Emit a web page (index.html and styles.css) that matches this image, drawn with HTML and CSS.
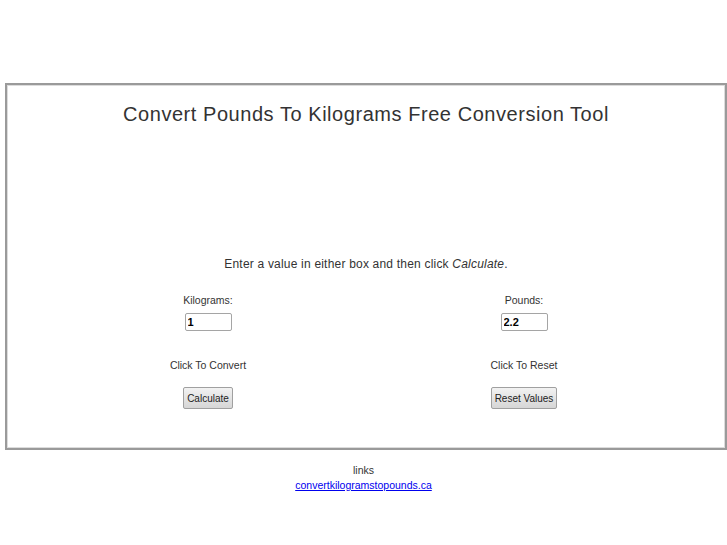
FILE: index.html
```html
<!DOCTYPE html>
<html>
<head>
<meta charset="utf-8">
<link rel="stylesheet" href="styles.css">
</head>
<body>
<div class="frame">
  <div class="inner">
    <h1 class="title">Convert Pounds To Kilograms Free Conversion Tool</h1>
    <p class="intro">Enter a value in either box and then click <em>Calculate</em>.</p>
    <div class="cols">
      <div class="col">
        <div class="label">Kilograms:</div>
        <input class="field" type="text" value="1">
        <div class="action">Click To Convert</div>
        <button class="btn">Calculate</button>
      </div>
      <div class="col">
        <div class="label">Pounds:</div>
        <input class="field" type="text" value="2.2">
        <div class="action">Click To Reset</div>
        <button class="btn">Reset Values</button>
      </div>
    </div>
  </div>
</div>
<div class="footer">
  <div class="links">links</div>
  <a class="link" href="#">convertkilogramstopounds.ca</a>
</div>
</body>
</html>
```

FILE: styles.css
```css
html, body {
  margin: 0;
  padding: 0;
  background: #fff;
}
body {
  font-family: "Liberation Sans", Arial, sans-serif;
  color: #333;
  overflow: hidden;
}
.frame {
  margin: 83px 0 0 5px;
  width: 718px;
  border: 2px solid #9a9a9a;
}
.inner {
  border: 1px solid #dcdcdc;
  height: 361px;
}
.title {
  margin: 16px 0 0 0;
  font-size: 20px;
  letter-spacing: 0.55px;
  font-weight: normal;
  text-align: center;
  line-height: 24px;
  color: #333;
}
.intro {
  margin: 130px 0 0 0;
  text-align: center;
  font-size: 12px;
  letter-spacing: 0.2px;
  line-height: 16px;
}
.cols {
  display: grid;
  grid-template-columns: 316px 316px;
  justify-content: center;
  margin-top: 21px;
  margin-left: 0;
}
.col {
  display: flex;
  flex-direction: column;
  align-items: center;
  font-size: 10.5px;
}
.label {
  line-height: 14px;
}
.field {
  margin-top: 6px;
  width: 41px;
  height: 14px;
  padding: 1px 2px;
  border: 1px solid #a5a5a5;
  border-radius: 2px;
  font-family: "Liberation Sans", Arial, sans-serif;
  font-size: 11px;
  font-weight: bold;
  color: #000;
  box-sizing: content-box;
}
.action {
  margin-top: 27px;
  line-height: 14px;
}
.btn {
  margin-top: 15px;
  height: 22px;
  padding: 0 3px;
  border: 1px solid #a0a0a0;
  border-radius: 2px;
  background: linear-gradient(#f2f2f2, #d6d6d6);
  font-family: "Liberation Sans", Arial, sans-serif;
  font-size: 10px;
  color: #222;
}
.footer {
  text-align: center;
  font-size: 10.5px;
  margin-top: 13px;
  line-height: 15px;
}
.links {
  color: #333;
}
.link {
  color: #0000ee;
  text-decoration: underline;
}
```
